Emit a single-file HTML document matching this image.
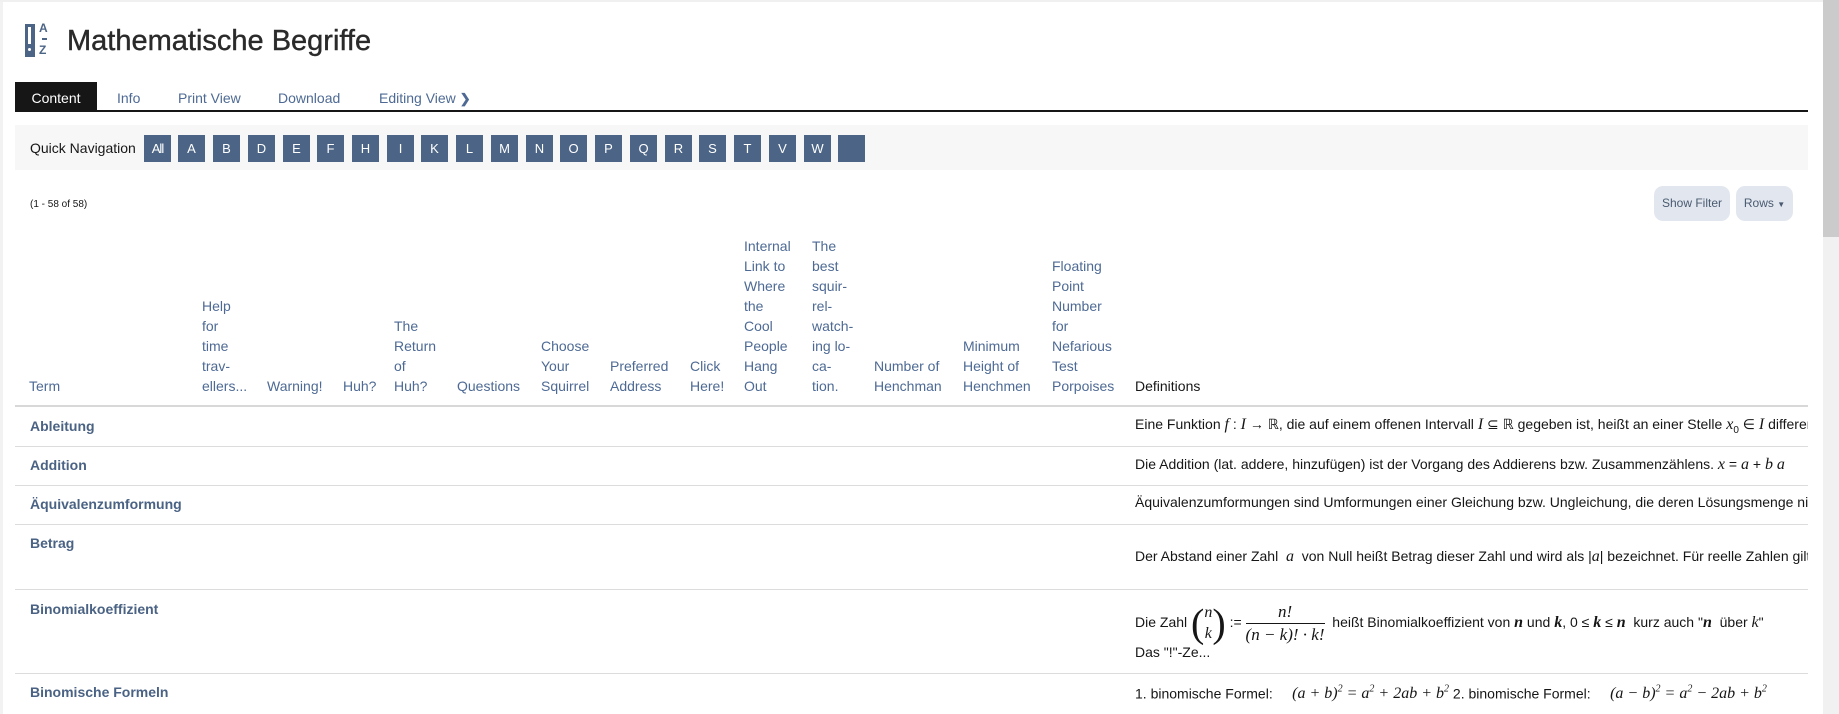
<!DOCTYPE html>
<html><head><meta charset="utf-8">
<style>
*{margin:0;padding:0;box-sizing:border-box}
body{width:1839px;height:714px;overflow:hidden;background:#fff;font-family:"Liberation Sans",sans-serif;color:#161616;position:relative}
.a{position:absolute;white-space:nowrap}
.lnk{color:#4e6a94}
.hd{position:absolute;bottom:318px;font-size:14px;line-height:20px;color:#4e6a94;white-space:nowrap}
.nb{position:absolute;top:135px;width:27px;height:27px;background:#4c6586;color:#fff;font-size:13px;line-height:27px;text-align:center}
.line{position:absolute;left:15px;width:1793px;height:1px;background:#dcdcdc}
.term{position:absolute;left:30px;font-size:14px;font-weight:bold;color:#4a6283;white-space:nowrap}
.def{position:absolute;left:1135px;font-size:14px;white-space:nowrap}
.m{font-family:"Liberation Serif",serif;font-style:italic;font-size:16px}
.btn{position:absolute;top:186px;height:35px;background:#e2e7ef;border-radius:9px;font-size:12px;color:#4a5a70;line-height:35px;text-align:center}
</style></head><body>
<div style="position:absolute;left:0;top:0;width:3px;height:714px;background:#f2f2f2"></div>
<div style="position:absolute;left:0;top:0;width:1839px;height:2px;background:#f0f0f0"></div>
<div class="a" style="left:25px;top:24px;width:10px;height:33px;background:#4c6586"></div>
<div class="a" style="left:28px;top:27px;width:3px;height:17px;background:#fff"></div>
<div class="a" style="left:28px;top:48px;width:3px;height:3px;background:#fff;border-radius:50%"></div>
<div class="a" style="left:39px;top:22px;font-size:12px;font-weight:bold;color:#4c6586;line-height:13px">A</div>
<div class="a" style="left:42px;top:38px;width:5px;height:2px;background:#4c6586"></div>
<div class="a" style="left:39px;top:44px;font-size:12px;font-weight:bold;color:#4c6586;line-height:13px">Z</div>
<div class="a" style="left:67px;top:23px;font-size:29px;line-height:36px;color:#2a2a2a;-webkit-text-stroke:0.4px #2a2a2a">Mathematische Begriffe</div>
<div class="a" style="left:15px;top:82px;width:82px;height:29px;background:#161616;color:#fff;font-size:14px;line-height:32px;text-align:center">Content</div>
<div class="a lnk" style="left:117px;top:82px;font-size:14px;line-height:32px">Info</div>
<div class="a lnk" style="left:178px;top:82px;font-size:14px;line-height:32px">Print View</div>
<div class="a lnk" style="left:278px;top:82px;font-size:14px;line-height:32px">Download</div>
<div class="a lnk" style="left:379px;top:82px;font-size:14px;line-height:32px">Editing View <b style="font-size:13px">&#10095;</b></div>
<div class="a" style="left:15px;top:110px;width:1793px;height:2px;background:#161616"></div>
<div class="a" style="left:15px;top:125px;width:1793px;height:45px;background:#f7f7f7"></div>
<div class="a" style="left:30px;top:139px;font-size:14px;line-height:18px">Quick Navigation</div>
<div class="nb" style="left:144px;letter-spacing:-1px">All</div>
<div class="nb" style="left:178px">A</div>
<div class="nb" style="left:213px">B</div>
<div class="nb" style="left:248px">D</div>
<div class="nb" style="left:283px">E</div>
<div class="nb" style="left:317px">F</div>
<div class="nb" style="left:352px">H</div>
<div class="nb" style="left:387px">I</div>
<div class="nb" style="left:421px">K</div>
<div class="nb" style="left:456px">L</div>
<div class="nb" style="left:491px">M</div>
<div class="nb" style="left:526px">N</div>
<div class="nb" style="left:560px">O</div>
<div class="nb" style="left:595px">P</div>
<div class="nb" style="left:630px">Q</div>
<div class="nb" style="left:665px">R</div>
<div class="nb" style="left:699px">S</div>
<div class="nb" style="left:734px">T</div>
<div class="nb" style="left:769px">V</div>
<div class="nb" style="left:804px">W</div>
<div class="nb" style="left:838px"></div>
<div class="a" style="left:30px;top:199px;font-size:10px">(1 - 58 of 58)</div>
<div class="btn" style="left:1654px;width:76px">Show Filter</div>
<div class="btn" style="left:1736px;width:57px">Rows <span style="font-size:8px">&#9660;</span></div>
<div class="hd" style="left:29px">Term</div>
<div class="hd" style="left:202px">Help<br>for<br>time<br>trav-<br>ellers...</div>
<div class="hd" style="left:267px">Warning!</div>
<div class="hd" style="left:343px">Huh?</div>
<div class="hd" style="left:394px">The<br>Return<br>of<br>Huh?</div>
<div class="hd" style="left:457px">Questions</div>
<div class="hd" style="left:541px">Choose<br>Your<br>Squirrel</div>
<div class="hd" style="left:610px">Preferred<br>Address</div>
<div class="hd" style="left:690px">Click<br>Here!</div>
<div class="hd" style="left:744px">Internal<br>Link to<br>Where<br>the<br>Cool<br>People<br>Hang<br>Out</div>
<div class="hd" style="left:812px">The<br>best<br>squir-<br>rel-<br>watch-<br>ing lo-<br>ca-<br>tion.</div>
<div class="hd" style="left:874px">Number of<br>Henchman</div>
<div class="hd" style="left:963px">Minimum<br>Height of<br>Henchmen</div>
<div class="hd" style="left:1052px">Floating<br>Point<br>Number<br>for<br>Nefarious<br>Test<br>Porpoises</div>
<div class="hd" style="left:1135px;color:#161616">Definitions</div>
<div class="line" style="top:405px;height:2px;background:#d8d8d8"></div>
<div class="line" style="top:446px"></div>
<div class="line" style="top:485px"></div>
<div class="line" style="top:524px"></div>
<div class="line" style="top:589px"></div>
<div class="line" style="top:673px"></div>
<div class="term" style="top:418px">Ableitung</div>
<div class="term" style="top:457px">Addition</div>
<div class="term" style="top:496px">Äquivalenzumformung</div>
<div class="term" style="top:535px">Betrag</div>
<div class="term" style="top:601px">Binomialkoeffizient</div>
<div class="term" style="top:684px">Binomische Formeln</div>
<div style="position:absolute;left:0;top:406px;width:1808px;height:308px;overflow:hidden">
<div class="def" style="top:10px">Eine Funktion <span class="m">f</span> : <span class="m">I</span> → ℝ, die auf einem offenen Intervall <span class="m">I</span> ⊆ ℝ gegeben ist, heißt an einer Stelle <span class="m">x</span><sub style="font-size:10px">0</sub> ∈ <span class="m">I</span> differenzierbar</div>
<div class="def" style="top:50px">Die Addition (lat. addere, hinzufügen) ist der Vorgang des Addierens bzw. Zusammenzählens. <span class="m">x</span> = <span class="m">a</span> + <span class="m">b</span> <span class="m">a</span></div>
<div class="def" style="top:88px">Äquivalenzumformungen sind Umformungen einer Gleichung bzw. Ungleichung, die deren Lösungsmenge nicht verändern</div>
<div class="def" style="top:142px">Der Abstand einer Zahl &nbsp;<span class="m">a</span>&nbsp; von Null heißt Betrag dieser Zahl und wird als |<span class="m">a</span>| bezeichnet. Für reelle Zahlen gilt</div>
<div class="def" style="top:194px;height:44px;line-height:44px">Die Zahl <span class="m" style="font-size:40px;font-style:normal;vertical-align:middle">(</span><span style="display:inline-block;vertical-align:middle;line-height:21px;text-align:center" class="m">n<br>k</span><span class="m" style="font-size:40px;font-style:normal;vertical-align:middle">)</span> := <span style="display:inline-block;vertical-align:middle;line-height:22px;text-align:center;font-size:17px" class="m"><span style="display:block;border-bottom:1px solid #161616;padding:0 6px">n!</span>(n − k)! · k!</span>&nbsp; heißt Binomialkoeffizient von <span class="m"><b>n</b></span> und <span class="m"><b>k</b></span>, 0 ≤ <span class="m"><b>k</b></span> ≤ <span class="m"><b>n</b></span> &nbsp;kurz auch "<span class="m"><b>n</b></span> &nbsp;über <span class="m">k</span>"</div>
<div class="def" style="top:238px">Das "!"-Ze...</div>
<div class="def" style="top:278px">1. binomische Formel: &nbsp;&nbsp;&nbsp; <span class="m">(a + b)<sup style="font-size:10px">2</sup> = a<sup style="font-size:10px">2</sup> + 2ab + b<sup style="font-size:10px">2</sup></span> 2. binomische Formel: &nbsp;&nbsp;&nbsp; <span class="m">(a − b)<sup style="font-size:10px">2</sup> = a<sup style="font-size:10px">2</sup> − 2ab + b<sup style="font-size:10px">2</sup></span></div>
</div>
<div class="a" style="left:1823px;top:0;width:16px;height:714px;background:#f1f1f1"></div>
<div class="a" style="left:1823px;top:0;width:16px;height:237px;background:#cbcbcb"></div>
</body></html>
